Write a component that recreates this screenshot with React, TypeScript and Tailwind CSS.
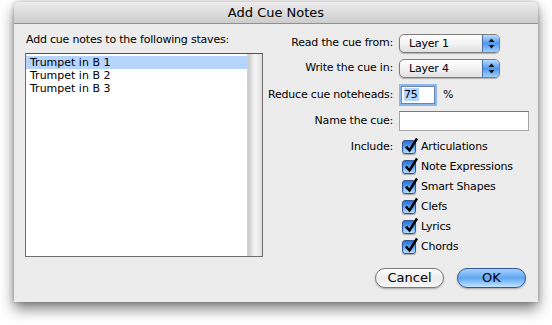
import React from "react";

const font = "font-['DejaVu_Sans','Liberation_Sans',sans-serif]";

function PopUp({ value }: { value: string }) {
  return (
    <div className="flex h-[19px] w-[101px] rounded-[5px] border border-[#7d7d7d] bg-gradient-to-b from-[#ffffff] via-[#f3f3f3] to-[#e0e0e0] shadow-[0_1px_1px_rgba(0,0,0,0.25)] overflow-hidden">
      <div className="flex-1 pl-[9px] text-[11px] leading-[17px] text-black">{value}</div>
      <div className="w-[17px] flex items-center justify-center border-l border-[#4a6fa8] bg-gradient-to-b from-[#b9dcff] via-[#4f98ee] to-[#9fd0ff]">
        <svg width="7" height="11" viewBox="0 0 7 11">
          <path d="M3.5 0.5 L6.5 4 L0.5 4 Z" fill="#111" />
          <path d="M3.5 10.5 L6.5 7 L0.5 7 Z" fill="#111" />
        </svg>
      </div>
    </div>
  );
}

function Check({ label }: { label: string }) {
  return (
    <div className="flex h-[20px] items-center">
      <div className="relative h-[14px] w-[14px] rounded-[3px] border border-[#34558f] bg-gradient-to-b from-[#2a6fd6] via-[#5aa2f0] to-[#bfe2ff] shadow-[0_1px_1px_rgba(0,0,0,0.3)]">
        <svg className="absolute left-[1px] top-[-4px]" width="15" height="16" viewBox="0 0 15 16">
          <path d="M2 9.5 L5.5 13.5 L13 1.5" stroke="#000" strokeWidth="2.4" fill="none" strokeLinejoin="miter" />
        </svg>
      </div>
      <span className="ml-[5px] text-[11px] tracking-[-0.2px] text-black">{label}</span>
    </div>
  );
}

export default function App() {
  const staves = ["Trumpet in B 1", "Trumpet in B 2", "Trumpet in B 3"];
  const includes = ["Articulations", "Note Expressions", "Smart Shapes", "Clefs", "Lyrics", "Chords"];

  return (
    <div className={`w-[552px] h-[325px] bg-white pl-[14px] pt-[2px] ${font}`}>
      <div className="w-[524px] h-[300px] rounded-t-[5px] bg-[#ececec] shadow-[0_7px_14px_rgba(0,0,0,0.5),0_0_4px_rgba(0,0,0,0.25)] flex flex-col">
        {/* title bar */}
        <div className="h-[22px] rounded-t-[5px] border-b border-[#8f8f8f] bg-gradient-to-b from-[#ececec] via-[#dcdcdc] to-[#cdcdcd] flex items-center justify-center">
          <span className="text-[13px] text-black leading-none">Add Cue Notes</span>
        </div>

        <div className="flex flex-1 pl-[11px]">
          {/* left column */}
          <div className="w-[238px] pt-[9px]">
            <div className="h-[14px] text-[11px] leading-[14px] tracking-[-0.2px] text-black pl-[1px]">
              Add cue notes to the following staves:
            </div>
            <div className="mt-[6px] flex h-[204px] border border-[#6f6f6f] border-t-[#555] bg-white">
              <div className="flex-1 pt-[2px]">
                {staves.map((s, i) => (
                  <div
                    key={s}
                    className={`h-[13px] pl-[4px] text-[11px] leading-[13px] text-black ${i === 0 ? "bg-[#b5d5ff]" : ""}`}
                  >
                    {s}
                  </div>
                ))}
              </div>
              <div className="w-[15px] bg-gradient-to-r from-[#c9c9c9] via-[#f7f7f7] to-[#dedede] border-l border-[#d0d0d0]" />
            </div>
          </div>

          {/* right column */}
          <div className="flex-1 pt-[9px] text-[11px] tracking-[-0.2px] text-black">
            <div className="flex h-[20px] items-center">
              <span className="w-[130px] text-right">Read the cue from:</span>
              <div className="ml-[6px]"><PopUp value="Layer 1" /></div>
            </div>
            <div className="mt-[5px] flex h-[20px] items-center">
              <span className="w-[130px] text-right">Write the cue in:</span>
              <div className="ml-[6px]"><PopUp value="Layer 4" /></div>
            </div>
            <div className="mt-[7px] flex h-[20px] items-center">
              <span className="w-[130px] text-right">Reduce cue noteheads:</span>
              <div className="ml-[8px] h-[18px] w-[34px] border border-[#6a86b0] bg-white shadow-[0_0_0_2px_#8fb6e8] pl-[2px] leading-[16px]">
                <span className="bg-[#b5d5ff] pr-[1px]">75</span>
              </div>
              <span className="ml-[8px]">%</span>
            </div>
            <div className="mt-[6px] flex h-[20px] items-center">
              <span className="w-[130px] text-right">Name the cue:</span>
              <div className="ml-[6px] h-[20px] w-[130px] border border-[#a5a5a5] border-t-[#7a7a7a] bg-white" />
            </div>
            <div className="mt-[6px] flex">
              <span className="w-[130px] text-right leading-[20px]">Include:</span>
              <div className="ml-[9px] flex flex-col">
                {includes.map((c) => (
                  <Check key={c} label={c} />
                ))}
              </div>
            </div>
            <div className="mt-[11px] flex justify-end gap-[13px] pr-[12px]">
              <button className="h-[20px] w-[69px] rounded-full border border-[#7a7a7a] bg-gradient-to-b from-[#ffffff] via-[#ececec] to-[#f8f8f8] text-[13px] leading-[18px] tracking-normal text-black shadow-[0_1px_2px_rgba(0,0,0,0.3)]">
                Cancel
              </button>
              <button className="h-[20px] w-[69px] rounded-full border border-[#34559a] bg-gradient-to-b from-[#a7d1ff] via-[#5ea6f2] to-[#c3e4ff] text-[13px] leading-[18px] tracking-normal text-black shadow-[0_1px_2px_rgba(0,0,0,0.3)]">
                OK
              </button>
            </div>
          </div>
        </div>
      </div>
    </div>
  );
}
